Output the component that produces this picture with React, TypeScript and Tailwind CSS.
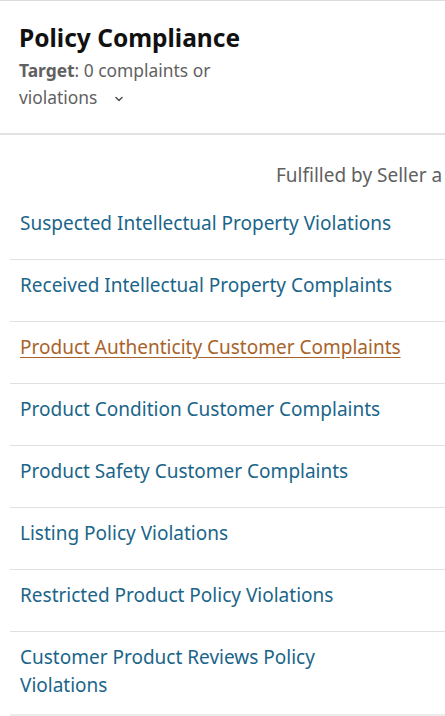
import React from 'react';

const rows: { lines: string[]; active?: boolean }[] = [
  { lines: ['Suspected Intellectual Property Violations'] },
  { lines: ['Received Intellectual Property Complaints'] },
  { lines: ['Product Authenticity Customer Complaints'], active: true },
  { lines: ['Product Condition Customer Complaints'] },
  { lines: ['Product Safety Customer Complaints'] },
  { lines: ['Listing Policy Violations'] },
  { lines: ['Restricted Product Policy Violations'] },
  { lines: ['Customer Product Reviews Policy', 'Violations'] },
];

function Chevron() {
  return (
    <svg width="12" height="12" viewBox="0 0 12 12" className="ml-4 inline-block align-middle text-[#555]" fill="none">
      <path d="M3 4.5 6 7.5 9 4.5" stroke="currentColor" strokeWidth="1.6" strokeLinecap="round" strokeLinejoin="round" />
    </svg>
  );
}

export default function App() {
  return (
    <main className="h-[716px] w-[445px] overflow-hidden bg-white font-['Noto_Sans',sans-serif] text-[#111]">
      <section className="border-t border-[#dcdcdc] border-b-2 border-b-[#e3e3e3] px-[19px] pt-[22px] pb-[22px]">
        <h1 className="text-[24.5px] font-bold leading-[30px]">Policy Compliance</h1>
        <p className="mt-[4px] w-[230px] text-[17.4px] leading-[27px] text-[#5f6161]">
          <span className="font-bold">Target</span>: 0 complaints or violations
          <Chevron />
        </p>
      </section>

      <div className="pl-[10px]">
        <div className="h-[63px] whitespace-nowrap pl-[266px] pt-[27px] text-[19px] leading-[26px] text-[#5f6161]">
          Fulfilled by Seller a
        </div>
        {rows.map((row, i) => (
          <div
            key={row.lines[0]}
            className={`pl-[10px] pt-[11px] ${i === rows.length - 1 ? 'pb-[15px] border-b-2 border-[#ececec]' : 'pb-[22px] border-b border-[#e0e0e0]'}`}
          >
            <a
              href="#"
              className={`block whitespace-nowrap text-[19px] leading-[28px] ${row.active ? 'text-[#a9632a] underline underline-offset-[3px]' : 'text-[#1a6589]'}`}
            >
              {row.lines.map(line => (
                <span key={line} className="block">
                  {line}
                </span>
              ))}
            </a>
          </div>
        ))}
      </div>
    </main>
  );
}
